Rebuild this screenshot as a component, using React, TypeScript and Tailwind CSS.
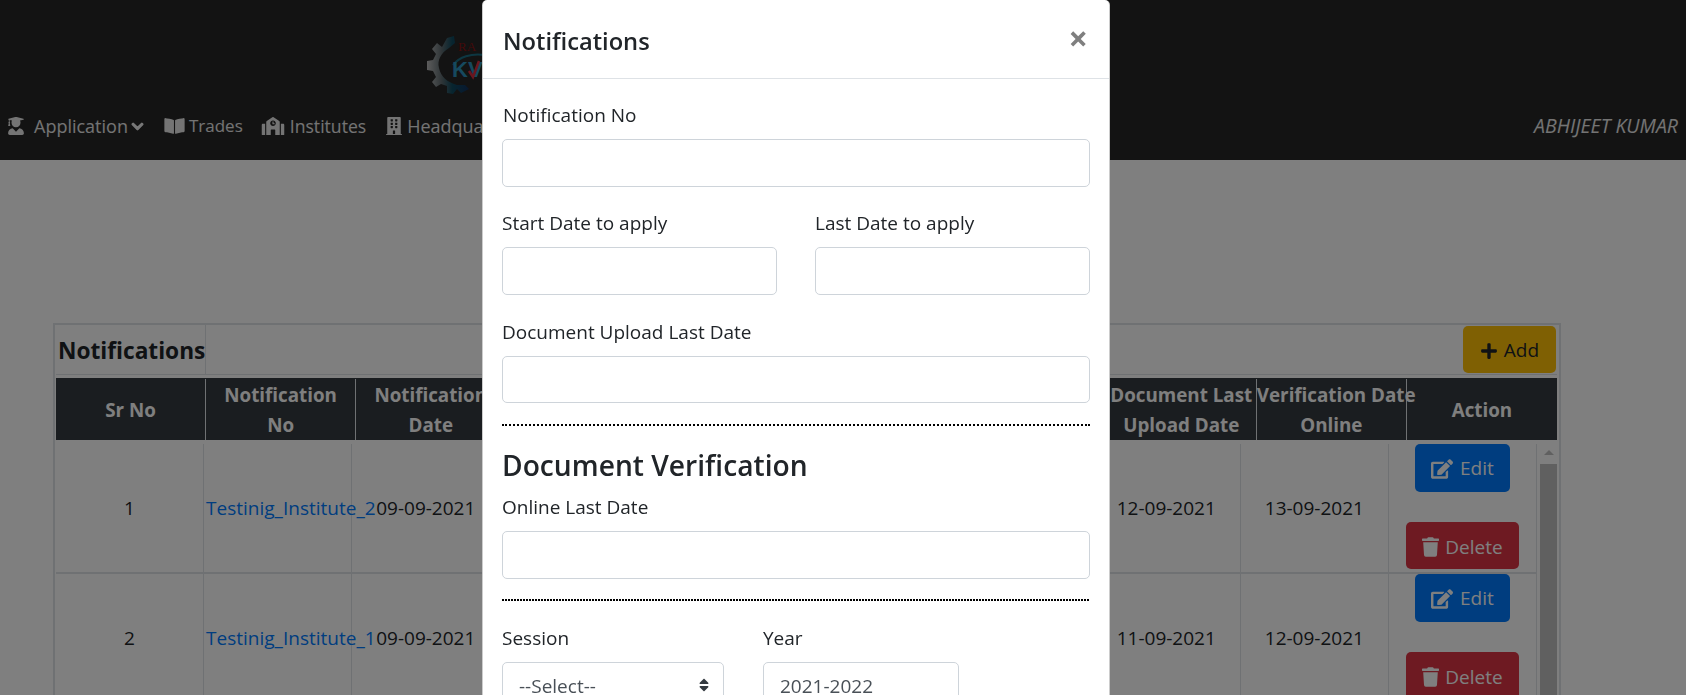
import { FaBookOpen, FaBuilding, FaChevronDown, FaEdit, FaPlus, FaSchool, FaSort, FaTrash, FaUserGraduate } from 'react-icons/fa';

const headers = [['Sr No'], ['Notification', 'No'], ['Notification', 'Date'], [], [], [], [], ['Document Last', 'Upload Date'], ['Verification Date', 'Online'], ['Action']];

const rows = [
  { no: '1', name: 'Testinig_Institute_2', date: '09-09-2021', upload: '12-09-2021', verify: '13-09-2021' },
  { no: '2', name: 'Testinig_Institute_1', date: '09-09-2021', upload: '11-09-2021', verify: '12-09-2021' },
];

const fieldCls = 'block w-full rounded-[5px] border border-[#ced4da] bg-white px-[16px] text-[19px] text-[#495057] outline-none';
const inputCls = `${fieldCls} h-[48px]`;
const labelCls = 'block text-[19px] leading-[26px] mb-[11px] text-[#212529]';

const Logo = () => (
  <svg width="62" height="60" viewBox="0 0 62 60" className="block">
    <defs>
      <linearGradient id="gear" x1="0" x2="1" y1="0" y2="0">
        <stop offset="0" stopColor="#b9b9b9" />
        <stop offset="0.35" stopColor="#5f6b70" />
        <stop offset="0.6" stopColor="#0f4a5e" />
        <stop offset="1" stopColor="#10305f" />
      </linearGradient>
    </defs>
    <path
      d="M20 3 L27 1 L28 8 L22 13 C14 18 10 25 12 33 C14 42 20 47 30 50 L38 50 L42 54 L34 58 L30 54 L26 59 L20 58 L20 51 L14 49 L9 52 L5 47 L9 42 L6 36 L0 35 L0 26 L6 25 L9 19 L5 14 L10 8 L15 12 Z"
      fill="url(#gear)"
    />
    <text x="31" y="16" fontFamily="'Liberation Serif', serif" fontSize="13" fill="#8a1414">RA</text>
    <path d="M26 30 C32 22 44 18 58 20" stroke="#1b6e84" strokeWidth="2" fill="none" />
    <text x="25" y="42" fontFamily="'Liberation Sans', sans-serif" fontWeight="700" fontSize="22" fill="#2c93bd">K</text>
    <text x="41" y="42" fontFamily="'Liberation Sans', sans-serif" fontWeight="700" fontSize="22" fill="#2c93bd">V</text>
    <path d="M42 36 L46 42 L52 26" stroke="#d32f3f" strokeWidth="2.5" fill="none" />
  </svg>
);

const NavItem = ({ icon, label, className }: { icon: React.ReactNode; label: string; className: string }) => (
  <a className={`flex items-center ${className}`}>
    {icon}
    <span>{label}</span>
  </a>
);

export default function App() {
  return (
    <div className="relative h-screen overflow-hidden bg-white text-[19px] text-[#212529] font-['Open_Sans','Noto_Sans',sans-serif]">
      {/* Navbar */}
      <nav className="h-[160px] bg-[#262626] flex flex-col">
        <div className="ml-[427px] mt-[35px] h-[60px]">
          <Logo />
        </div>
        <div className="flex items-center h-[24px] mt-[19px] pl-[8px] pr-[8px] text-[18px] text-white/90 whitespace-nowrap">
          <NavItem icon={<FaUserGraduate className="w-[16px] h-[18px] mr-[10px]" />} label="Application" className="" />
          <FaChevronDown className="w-[13px] h-[13px] ml-[3px] mr-[20px] stroke-[40]" />
          <NavItem icon={<FaBookOpen className="w-[21px] h-[18px] mr-[4px]" />} label="Trades" className="mr-[18px] text-[17px]" />
          <NavItem icon={<FaSchool className="w-[24px] h-[18px] mr-[5px]" />} label="Institutes" className="mr-[20px] text-[17.6px]" />
          <NavItem icon={<FaBuilding className="w-[16px] h-[18px] mr-[5px]" />} label="Headquarters" className="" />
          <span className="ml-auto italic text-[19.5px]">ABHIJEET KUMAR</span>
        </div>
      </nav>

      {/* Notifications table */}
      <div className="ml-[53px] mt-[163px] w-[1508px] h-[600px] border-2 border-[#dee2e6] pl-px pr-[2px]">
        <div className="flex h-[50px] items-center border-b border-[#dee2e6]">
          <div className="w-[150px] h-full flex items-center border-r border-[#dee2e6] pl-[2px] pt-[3px] text-[22.7px] font-bold whitespace-nowrap">Notifications</div>
          <button className="ml-auto mr-px w-[93px] h-[47px] flex items-center justify-center gap-[6px] rounded-[5px] bg-[#ffc107] pt-[2px] text-[19px]">
            <FaPlus className="w-[18px] h-[18px]" />
            Add
          </button>
        </div>
        <div className="grid grid-cols-10 h-[62px] mt-[3px] pt-px bg-[#343a40] text-white text-[18.8px] font-bold leading-[30px]">
          {headers.map((h, i) => (
            <div key={i} className="flex items-center justify-center border-r border-[#dee2e6] last:border-r-0 min-w-0">
              <div className="w-full text-center whitespace-nowrap">
                {h.map((line) => (
                  <div key={line}>{line}</div>
                ))}
              </div>
            </div>
          ))}
        </div>
        <div className="flex mt-[4px]">
          <div className="w-[1481px]">
            {rows.map((r) => (
              <div key={r.no} className="grid grid-cols-10 h-[130px] border-b-2 border-[#dee2e6]">
                <div className="flex items-center justify-center border-r border-[#dee2e6]">{r.no}</div>
                <div className="flex items-center border-r border-[#dee2e6] pl-[2px] whitespace-nowrap text-[#007bff]">{r.name}</div>
                <div className="flex items-center justify-center border-r border-[#dee2e6]">{r.date}</div>
                <div className="border-r border-[#dee2e6]" />
                <div className="border-r border-[#dee2e6]" />
                <div className="border-r border-[#dee2e6]" />
                <div className="border-r border-[#dee2e6]" />
                <div className="flex items-center justify-center border-r border-[#dee2e6]">{r.upload}</div>
                <div className="flex items-center justify-center border-r border-[#dee2e6]">{r.verify}</div>
                <div className="flex flex-col items-center gap-[30px] border-r border-[#dee2e6]">
                  <button className="w-[95px] h-[48px] flex items-center justify-center gap-[7px] rounded-[5px] bg-[#007bff] pt-px text-white">
                    <FaEdit className="w-[22px] h-[20px]" />
                    Edit
                  </button>
                  <button className="w-[113px] h-[47px] flex items-center justify-center gap-[6px] rounded-[5px] bg-[#dc3545] pt-[3px] text-white">
                    <FaTrash className="w-[17px] h-[20px]" />
                    Delete
                  </button>
                </div>
              </div>
            ))}
          </div>
          <div className="w-[20px] pl-[3px] pt-[6px] flex flex-col items-center">
            <div className="w-0 h-0 border-x-[5px] border-x-transparent border-b-[5px] border-b-[#c1c1c1]" />
            <div className="w-full h-[300px] mt-[9px] bg-[#c1c1c1]" />
          </div>
        </div>
      </div>

      {/* Modal */}
      <div className="fixed inset-0 bg-black/50 overflow-hidden">
        <div className="ml-[482px] w-[628px] h-[800px] bg-white rounded-[5px] border-x border-black/20">
          <div className="flex items-center justify-between h-[79px] pl-[20px] pr-[21px] border-b border-[#dee2e6]">
            <h5 className="pt-[5px] text-[23.7px] font-semibold text-[#212529]">Notifications</h5>
            <span className="text-[#7f7f7f] text-[34px] font-bold leading-none -mt-[2px]">×</span>
          </div>
          <form className="pt-[23px] pl-[19px] pr-[19px]">
            <label className={`${labelCls} pl-px`}>Notification No</label>
            <input className={`${inputCls} mb-[23px]`} />
            <div className="grid grid-cols-2 gap-x-[38px]">
              <div>
                <label className={labelCls}>Start Date to apply</label>
                <input className={`${inputCls} mb-[24px]`} />
              </div>
              <div>
                <label className={labelCls}>Last Date to apply</label>
                <input className={`${inputCls} mb-[24px]`} />
              </div>
            </div>
            <label className={labelCls}>Document Upload Last Date</label>
            <input className={`${fieldCls} h-[47px]`} />
            <hr className="mt-[21px] border-0 border-t-2 border-dotted border-black" />
            <h3 className="mt-[22px] text-[28.2px] leading-[35px] font-semibold">Document Verification</h3>
            <label className={`${labelCls} mt-[11px]`}>Online Last Date</label>
            <input className={inputCls} />
            <div className="mt-[20px] h-[2px] bg-[repeating-linear-gradient(90deg,#000_0_2px,transparent_2px_3px)]" />
            <div className="flex gap-[39px] mt-[24px]">
              <div className="w-[222px]">
                <label className={labelCls}>Session</label>
                <div className="relative">
                  <select className={`${inputCls} appearance-none`}>
                    <option>--Select--</option>
                  </select>
                  <FaSort className="absolute right-[14px] top-[15px] w-[12px] h-[16px] text-[#343a40]" />
                </div>
              </div>
              <div className="w-[196px]">
                <label className={labelCls}>Year</label>
                <input className={inputCls} defaultValue="2021-2022" readOnly />
              </div>
            </div>
          </form>
        </div>
      </div>
    </div>
  );
}
